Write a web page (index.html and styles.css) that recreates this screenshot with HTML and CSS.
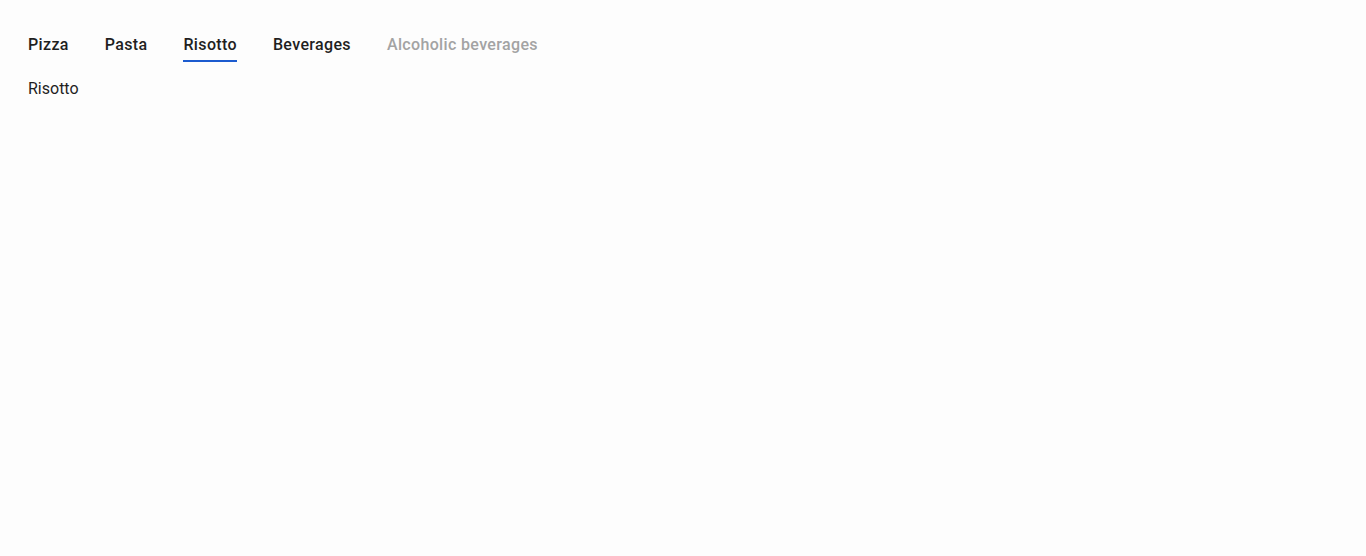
FILE: index.html
```html
<!DOCTYPE html>
<html>
<head>
<meta charset="utf-8">
<link rel="stylesheet" href="styles.css">
</head>
<body>
<div class="page">
  <nav class="tabs">
    <span class="tab">Pizza</span>
    <span class="tab">Pasta</span>
    <span class="tab active">Risotto</span>
    <span class="tab">Beverages</span>
    <span class="tab disabled">Alcoholic beverages</span>
  </nav>
  <div class="panel">Risotto</div>
</div>
</body>
</html>
```
FILE: styles.css
```css
html, body {
  margin: 0;
  padding: 0;
  background: #fdfdfd;
  font-family: Roboto, "Liberation Sans", sans-serif;
  color: #1f1f1f;
}
.page {
  padding: 24px 28px;
}
.tabs {
  display: flex;
  gap: 36px;
}
.tab {
  font-size: 16px;
  font-weight: 500;
  line-height: 24px;
  letter-spacing: 0.35px;
  padding: 9px 0 3px;
  border-bottom: 2px solid transparent;
  color: #1f1f1f;
}
.tab.active {
  border-bottom-color: #1c5bcf;
}
.tab.disabled {
  color: #a3a3a3;
}
.panel {
  font-size: 16px;
  line-height: 24px;
  padding-top: 15px;
}
```
